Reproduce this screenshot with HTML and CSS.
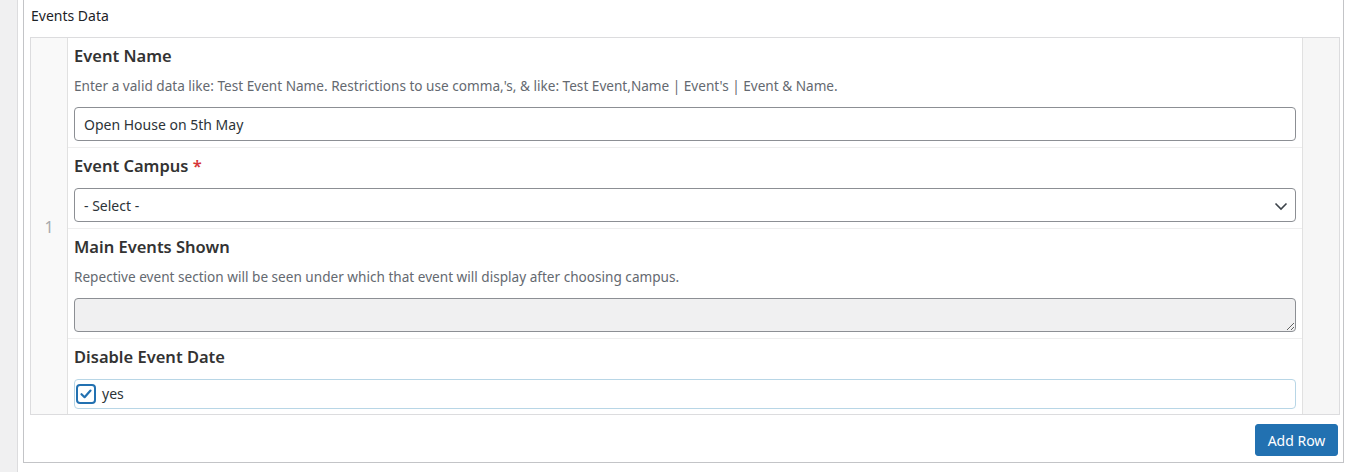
FILE: index.html
```html
<!DOCTYPE html>
<html>
<head>
<meta charset="utf-8">
<link rel="stylesheet" href="styles.css">
</head>
<body>
<div class="sidebar"></div>
<div class="main">
  <div class="box">
    <div class="box-title">Events Data</div>
    <div class="repeater">
      <div class="row-num">1</div>
      <div class="fields">
        <div class="field">
          <div class="label">Event Name</div>
          <div class="desc">Enter a valid data like: Test Event Name. Restrictions to use comma,'s, &amp; like: Test Event,Name | Event's | Event &amp; Name.</div>
          <input class="text-input" type="text" value="Open House on 5th May">
        </div>
        <div class="field">
          <div class="label">Event Campus <span class="req">*</span></div>
          <div class="select">
            <span>- Select -</span>
            <svg class="chev" width="14" height="9" viewBox="0 0 14 9"><path d="M1.5 1.5 L7 7 L12.5 1.5" fill="none" stroke="#3c434a" stroke-width="1.6"/></svg>
          </div>
        </div>
        <div class="field">
          <div class="label">Main Events Shown</div>
          <div class="desc">Repective event section will be seen under which that event will display after choosing campus.</div>
          <textarea class="textarea" disabled></textarea>
        </div>
        <div class="field last">
          <div class="label">Disable Event Date</div>
          <div class="check-wrap">
            <span class="check">
              <svg width="14" height="14" viewBox="0 0 14 14"><path d="M2.5 7.2 L5.6 10.2 L11.5 3.6" fill="none" stroke="#2271b1" stroke-width="2.2" stroke-linecap="round" stroke-linejoin="round"/></svg>
            </span>
            <span class="check-text">yes</span>
          </div>
        </div>
      </div>
      <div class="row-side"></div>
    </div>
    <div class="actions">
      <button class="btn">Add Row</button>
    </div>
  </div>
</div>
</body>
</html>
```

FILE: styles.css
```css
* { box-sizing: border-box; }
html, body { margin: 0; padding: 0; }
body {
  display: flex;
  background: #fff;
  font-family: "Noto Sans", "Open Sans", sans-serif;
  color: #3c434a;
  height: 472px;
  overflow: hidden;
}
.sidebar {
  width: 18px;
  flex: none;
  background: #f0f0f1;
  border-right: 1px solid #dcdcde;
}
.main {
  flex: 1;
  padding: 0 4px 0 5px;
}
.box {
  border: 1px solid #c3c4c7;
  border-top: none;
  padding: 0 3px 6px 6px;
}
.box-title {
  font-size: 14px;
  line-height: 20px;
  color: #1d2327;
  padding: 6px 0 11px 1px;
}
.repeater {
  display: grid;
  grid-template-columns: 37px 1fr 37px;
  border: 1px solid #dcdcde;
}
.row-num {
  background: #f9f9f9;
  border-right: 1px solid #e1e1e1;
  display: flex;
  align-items: center;
  justify-content: center;
  color: #a7aaad;
  font-size: 16px;
  padding-top: 2px;
}
.row-side {
  background: #f6f6f6;
  border-left: 1px solid #e1e1e1;
}
.fields {
  display: flex;
  flex-direction: column;
}
.field {
  padding: 6px 6px 6px 6px;
  border-bottom: 1px solid #eeeeee;
}
.field.last { border-bottom: none; padding-bottom: 5px; }
.label {
  font-size: 16.5px;
  font-weight: 600;
  line-height: 24px;
  color: #333;
  margin-bottom: 10px;
}
.req { color: #d63638; }
.desc {
  font-size: 13.6px;
  line-height: 17px;
  color: #646970;
  margin-top: -1px;
  margin-bottom: 13px;
}
.text-input {
  display: block;
  width: 100%;
  height: 34px;
  border: 1px solid #8c8f94;
  border-radius: 4px;
  padding: 0 9px;
  font-family: inherit;
  font-size: 14px;
  color: #2c3338;
  background: #fff;
  outline: none;
}
.select {
  display: flex;
  align-items: center;
  justify-content: space-between;
  height: 34px;
  border: 1px solid #8c8f94;
  border-radius: 4px;
  padding: 0 7px 0 9px;
  font-size: 14px;
  color: #2c3338;
}
.chev { margin-top: 2px; }
.textarea {
  display: block;
  width: 100%;
  height: 34px;
  border: 1px solid #8c8f94;
  border-radius: 4px;
  background: #f0f0f1;
  resize: vertical;
  font-family: inherit;
}
.check-wrap {
  display: flex;
  align-items: center;
  height: 30px;
  border: 1px solid #b8d6e6;
  border-radius: 4px;
  padding-left: 1px;
}
.check {
  width: 20px;
  height: 20px;
  border: 2px solid #2271b1;
  border-radius: 4px;
  display: flex;
  align-items: center;
  justify-content: center;
  background: #fff;
}
.check-text {
  margin-left: 6px;
  font-size: 14px;
  color: #2c3338;
  padding-bottom: 2px;
}
.actions {
  display: flex;
  justify-content: flex-end;
  padding: 9px 2px 0 0;
}
.btn {
  width: 83px;
  height: 32px;
  background: #2271b1;
  border: 1px solid #2271b1;
  border-radius: 3px;
  color: #fff;
  font-family: inherit;
  font-size: 14px;
  padding: 0;
}
```
